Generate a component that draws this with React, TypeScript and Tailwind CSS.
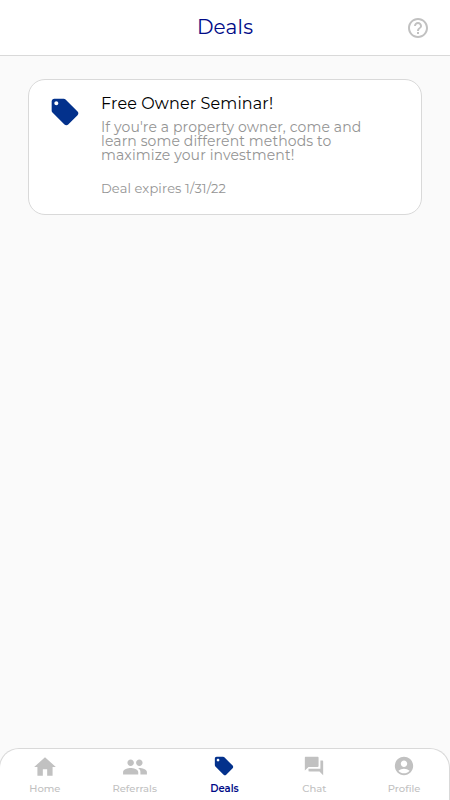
import { MdAccountCircle, MdForum, MdHelpOutline, MdHome, MdLocalOffer, MdPeople } from 'react-icons/md';
import type { IconType } from 'react-icons';

interface Tab {
    label: string;
    icon: IconType;
    size: number;
}

const tabs: Tab[] = [
    { label: 'Home', icon: MdHome, size: 26 },
    { label: 'Referrals', icon: MdPeople, size: 26 },
    { label: 'Deals', icon: MdLocalOffer, size: 22 },
    { label: 'Chat', icon: MdForum, size: 22 },
    { label: 'Profile', icon: MdAccountCircle, size: 22 },
];

const Header = () => (
    <header className="relative flex h-14 shrink-0 items-center justify-center border-b border-[#d9d9d9] bg-white">
        <h1 className="pb-px text-[20px] leading-6 tracking-[0.2px] text-[#000a87]">Deals</h1>
        <button className="absolute top-4 right-5 text-[#c1c1c1]" aria-label="Help">
            <MdHelpOutline size={24} />
        </button>
    </header>
);

const DealCard = () => (
    <article className="flex h-[136px] rounded-[17px] border border-[#d9d9d9] bg-white pt-4 pl-5">
        <MdLocalOffer size={32} className="shrink-0 text-[#03318c]" />
        <div className="ml-5 tracking-[0.12px] whitespace-nowrap text-[#949494]">
            <h2 className="text-[16px] leading-4 text-black">Free Owner Seminar!</h2>
            <p className="mt-2 text-[14px] leading-[14px]">
                If you're a property owner, come and
                <br />
                learn some different methods to
                <br />
                maximize your investment!
            </p>
            <p className="mt-[18px] text-[13px] leading-4">Deal expires 1/31/22</p>
        </div>
    </article>
);

const TabBar = ({ active }: { active: string }) => (
    <nav className="-ml-px flex h-[52px] shrink-0 rounded-t-[20px] border border-b-0 border-[#d9d9d9] bg-white">
        {tabs.map(({ label, icon: Icon, size }) => (
            <button key={label} className="flex flex-1 flex-col items-center pt-[5px]">
                <span className={`flex h-[26px] items-center ${size < 26 ? 'pb-0.5' : ''} ${label === active ? 'text-[#03318c]' : 'text-[#c1c1c1]'}`}>
                    <Icon size={size} />
                </span>
                <span className={`mt-[3px] text-[10px] leading-3 ${label === active ? 'font-semibold text-[#000a87]' : 'font-medium text-[#c1c1c1]'}`}>
                    {label}
                </span>
            </button>
        ))}
    </nav>
);

export default function App() {
    return (
        <div className="flex h-screen flex-col bg-[#fafafa] font-['Montserrat','Inter',sans-serif]">
            <Header />
            <main className="flex-1 px-7 pt-[23px]">
                <DealCard />
            </main>
            <TabBar active="Deals" />
        </div>
    );
}
